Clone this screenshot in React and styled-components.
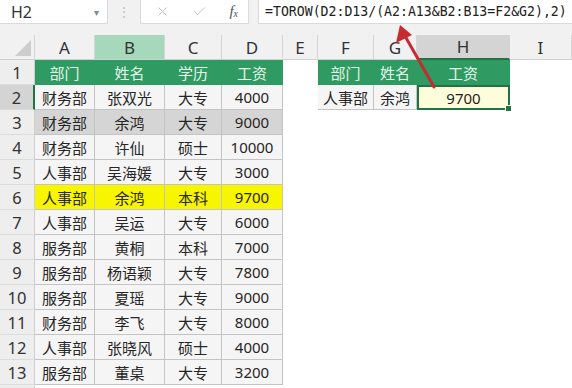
import React from 'react';
import styled, { createGlobalStyle } from 'styled-components';
import { X, Check } from 'lucide-react';

const GlobalStyle = createGlobalStyle`
  html, body {
    margin: 0;
    padding: 0;
    background: #ffffff;
  }
`;

const cols = [
  { key: '', w: 35 },
  { key: 'A', w: 60 },
  { key: 'B', w: 70, hl: 'green' },
  { key: 'C', w: 57 },
  { key: 'D', w: 61 },
  { key: 'E', w: 35 },
  { key: 'F', w: 56 },
  { key: 'G', w: 43 },
  { key: 'H', w: 93, hl: 'gray' },
  { key: 'I', w: 62 },
];

const data = [
  ['部门', '姓名', '学历', '工资'],
  ['财务部', '张双光', '大专', '4000'],
  ['财务部', '余鸿', '大专', '9000'],
  ['财务部', '许仙', '硕士', '10000'],
  ['人事部', '吴海媛', '大专', '3000'],
  ['人事部', '余鸿', '本科', '9700'],
  ['人事部', '吴运', '大专', '6000'],
  ['服务部', '黄桐', '本科', '7000'],
  ['服务部', '杨语颖', '大专', '7800'],
  ['服务部', '夏瑶', '大专', '9000'],
  ['财务部', '李飞', '大专', '8000'],
  ['人事部', '张晓风', '硕士', '4000'],
  ['服务部', '董桌', '大专', '3200'],
];

const lookup = [
  ['部门', '姓名', '工资'],
  ['人事部', '余鸿', '9700'],
];

const GREEN = '#2f9a61';

function fillFor(row) {
  if (row === 1) return GREEN;
  if (row === 3) return '#d5d5d5';
  if (row === 6) return '#f8f500';
  return '#f5f5f5';
}

function App() {
  return (
    <Page>
      <GlobalStyle />
      <FormulaBar>
        <NameBox>
          <span>H2</span>
          <Caret>▾</Caret>
        </NameBox>
        <Dots>⋮</Dots>
        <ButtonBox>
          <X size={15} strokeWidth={1.4} color="#b9b9b9" />
          <Check size={15} strokeWidth={1.4} color="#b9b9b9" />
          <Fx>
            f<sub>x</sub>
          </Fx>
        </ButtonBox>
        <FormulaInput>=TOROW(D2:D13/(A2:A13&amp;B2:B13=F2&amp;G2),2)</FormulaInput>
      </FormulaBar>

      <Sheet $cols={cols.map((c) => c.w + 'px').join(' ')}>
        <Corner />
        {cols.slice(1).map((c) => (
          <ColHead key={c.key} $hl={c.hl}>
            {c.key}
          </ColHead>
        ))}

        {data.map((row, i) => {
          const r = i + 1;
          return (
            <React.Fragment key={r}>
              <RowHead $active={r === 2}>{r}</RowHead>
              {row.map((v, j) => (
                <Cell key={j} $fill={fillFor(r)} $head={r === 1} $border>
                  {v}
                </Cell>
              ))}
              <Cell />
              {r <= 2
                ? lookup[i].map((v, j) =>
                    r === 2 && j === 2 ? (
                      <Selected key={j}>{v}</Selected>
                    ) : (
                      <Cell key={j} $fill={r === 1 ? GREEN : '#f5f5f5'} $head={r === 1} $border>
                        {v}
                      </Cell>
                    )
                  )
                : [<Cell key="f" />, <Cell key="g" />, <Cell key="h" />]}
              <Cell />
            </React.Fragment>
          );
        })}
        <RowHead />
      </Sheet>

      <Arrow viewBox="0 0 572 388" width="572" height="388">
        <line x1="434" y1="87" x2="405" y2="36" stroke="#c62b30" strokeWidth="3" strokeLinecap="round" />
        <polygon points="400,25 396,43 412,35" fill="#c62b30" />
      </Arrow>
    </Page>
  );
}

export default App;

const Page = styled.div`
  position: relative;
  width: 572px;
  height: 388px;
  overflow: hidden;
  background: #ffffff;
  font-family: 'Noto Sans', 'Noto Sans CJK SC', sans-serif;
`;

const FormulaBar = styled.div`
  display: flex;
  align-items: flex-start;
  height: 35px;
  background: #f1f1f1;
  box-sizing: border-box;
`;

const Box = styled.div`
  height: 24px;
  background: #ffffff;
  border: 1px solid #dadada;
  border-top: none;
  box-sizing: border-box;
  display: flex;
  align-items: center;
`;

const NameBox = styled(Box)`
  width: 108px;
  border-left: none;
  padding: 0 8px 0 11px;
  justify-content: space-between;
  font-size: 16px;
  color: #333;
`;

const Caret = styled.span`
  font-size: 10px;
  color: #888;
`;

const Dots = styled.div`
  width: 32px;
  text-align: center;
  font-size: 14px;
  line-height: 24px;
  color: #c4c4c4;
`;

const ButtonBox = styled(Box)`
  width: 109px;
  padding: 0 10px 0 14px;
  justify-content: space-between;
`;

const Fx = styled.span`
  font-family: 'Liberation Serif', serif;
  font-style: italic;
  font-size: 15px;
  color: #555;
  sub {
    font-size: 10px;
    vertical-align: -1px;
  }
`;

const FormulaInput = styled(Box)`
  flex: 1;
  margin-left: 9px;
  border-right: none;
  padding-left: 6px;
  font-family: 'DejaVu Sans Mono', monospace;
  font-size: 13.2px;
  color: #222;
  white-space: nowrap;
`;

const Sheet = styled.div`
  display: grid;
  grid-template-columns: ${(p) => p.$cols};
  grid-template-rows: repeat(14, 25px) 10px;
`;

const Corner = styled.div`
  position: relative;
  background: #f1f1f1;
  border-right: 1px solid #d6d6d6;
  border-bottom: 1px solid #cfcfcf;
  box-sizing: border-box;
  &::after {
    content: '';
    position: absolute;
    right: 3px;
    bottom: 3px;
    border-style: solid;
    border-width: 0 0 16px 16px;
    border-color: transparent transparent #cdcdcd transparent;
  }
`;

const ColHead = styled.div`
  display: flex;
  align-items: center;
  justify-content: center;
  font-size: 17px;
  color: #333;
  box-sizing: border-box;
  background: ${(p) => (p.$hl === 'green' ? '#a6d9bb' : p.$hl === 'gray' ? '#d4d4d4' : '#f1f1f1')};
  border-right: 1px solid #d6d6d6;
  border-bottom: ${(p) => (p.$hl === 'gray' ? '2px solid #217346' : '1px solid #cfcfcf')};
`;

const RowHead = styled.div`
  display: flex;
  align-items: center;
  justify-content: center;
  font-size: 16.5px;
  color: #333;
  box-sizing: border-box;
  background: ${(p) => (p.$active ? '#d4d4d4' : '#eeeeee')};
  border-right: ${(p) => (p.$active ? '2px solid #217346' : '1px solid #cfcfcf')};
  border-bottom: 1px solid #dcdcdc;
`;

const Cell = styled.div`
  display: flex;
  align-items: center;
  justify-content: center;
  font-size: 15px;
  white-space: nowrap;
  box-sizing: border-box;
  background: ${(p) => p.$fill || '#ffffff'};
  color: ${(p) => (p.$head ? '#e6f5ec' : '#262626')};
  border-right: ${(p) => (p.$border ? `1px solid ${p.$head ? GREEN : '#c4c4c4'}` : 'none')};
  border-bottom: ${(p) => (p.$border ? `1px solid ${p.$head ? GREEN : '#c4c4c4'}` : 'none')};
`;

const Selected = styled.div`
  position: relative;
  display: flex;
  align-items: center;
  justify-content: center;
  font-size: 15px;
  color: #1e1e1e;
  background: #fdfddb;
  border: 2px solid #217346;
  box-sizing: border-box;
  &::after {
    content: '';
    position: absolute;
    right: -4px;
    bottom: -4px;
    width: 5px;
    height: 5px;
    background: #217346;
    border: 1px solid #ffffff;
  }
`;

const Arrow = styled.svg`
  position: absolute;
  left: 0;
  top: 0;
  pointer-events: none;
`;
